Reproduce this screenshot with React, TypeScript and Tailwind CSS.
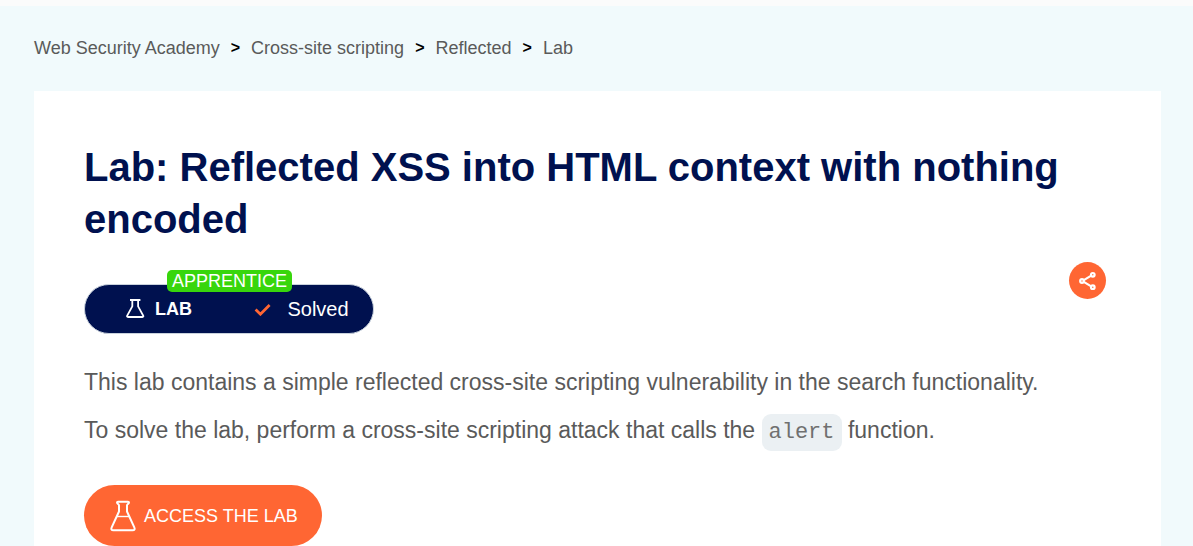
import { Fragment } from "react";

const crumbs = ["Web Security Academy", "Cross-site scripting", "Reflected"];

function SmallFlask() {
  return (
    <svg viewBox="0 0 20 20" className="h-5 w-5" fill="none" stroke="currentColor" strokeWidth="1.8" aria-hidden="true">
      <path d="M5 1h10.4M7.3 1v6.4L2.2 16.6q-.6 1.4.8 1.4h14.4q1.4 0 .8-1.4L13.1 7.4V1" strokeLinejoin="round" />
    </svg>
  );
}

function LargeFlask() {
  return (
    <svg viewBox="0 0 26 32" className="h-8 w-[26px]" fill="none" stroke="currentColor" strokeWidth="2" aria-hidden="true">
      <path
        d="M8 1.7h10q1 0 1 .9t-1.1 1.4q-.9.5-.9 1.5v6l7.2 15.6q1.4 3.2-1.6 3.2H3.4q-3 0-1.6-3.2L9 11.5v-6q0-1-.9-1.5Q7 3.5 7 2.6t1-.9z"
        strokeLinejoin="round"
      />
      <path d="M6.6 16.5h12.8" strokeWidth="1.4" />
    </svg>
  );
}

function Check() {
  return (
    <svg viewBox="0 0 17 14" className="h-3.5 w-[17px]" fill="none" stroke="#ff6633" strokeWidth="2.8" aria-hidden="true">
      <path d="M1.6 7.6l4.8 4.6L15.6 3" />
    </svg>
  );
}

function Share() {
  return (
    <svg viewBox="0 0 18 20" className="h-5 w-[18px]" fill="none" stroke="currentColor" strokeWidth="2.2" aria-hidden="true">
      <path d="M4.8 9.1l7-4.2M4.8 10.9l7 4.2" />
      <circle cx="3" cy="10" r="1.8" />
      <circle cx="13.8" cy="3.8" r="1.8" />
      <circle cx="13.8" cy="16.2" r="1.8" />
    </svg>
  );
}

export default function App() {
  return (
    <div className="flex min-h-screen flex-col border-t-[6px] border-[#fbfbfb] bg-[#f1fafc] pr-8 pl-[34px] font-['Liberation_Sans',Arial,sans-serif] text-[#5a5a5a]">
      <nav aria-label="Breadcrumb" className="flex h-[85px] items-center gap-[11px] pb-0.5 text-lg">
        {crumbs.map((crumb) => (
          <Fragment key={crumb}>
            <a href="#">{crumb}</a>
            <span className="text-base font-bold text-black" aria-hidden="true">
              &gt;
            </span>
          </Fragment>
        ))}
        <a href="#">Lab</a>
      </nav>

      <main className="grow bg-white pt-[50px] pr-[55px] pl-[50px]">
        <h1 className="text-[40px] leading-[52px] font-bold text-[#00114f]">
          Lab: Reflected XSS into HTML context with nothing encoded
        </h1>

        <div className="mt-[17px] flex items-start justify-between">
          <div className="relative mt-[22px] flex h-[50px] w-[290px] items-center rounded-full border border-[#c9d2dc] bg-[#00114f] text-white">
            <span className="absolute -top-[15px] left-[82px] rounded-[5px] bg-[#38d60c] px-[5px] text-lg leading-[22px]">
              APPRENTICE
            </span>
            <span className="flex flex-1 items-center justify-center gap-2.5 pl-0.5 text-lg font-bold">
              <SmallFlask />
              LAB
            </span>
            <span className="flex flex-1 items-center justify-center gap-4 text-xl">
              <Check />
              Solved
            </span>
          </div>
          <button
            type="button"
            aria-label="Share"
            className="flex size-[37px] items-center justify-center rounded-full bg-[#ff6633] text-white"
          >
            <Share />
          </button>
        </div>

        <div className="mt-6 text-[23px] leading-[48px]">
          <p>This lab contains a simple reflected cross-site scripting vulnerability in the search functionality.</p>
          <p>
            To solve the lab, perform a cross-site scripting attack that calls the{" "}
            <code className="rounded-[9px] bg-[#ebf0f3] px-[7px] py-1.5 font-['Liberation_Mono','Courier_New',monospace] text-[22px] text-[#707070]">
              alert
            </code>{" "}
            function.
          </p>
        </div>

        <a
          href="#"
          className="mt-7 inline-flex h-[61px] items-center gap-2 rounded-full bg-[#ff6633] pr-6 pl-[26px] text-lg text-white"
        >
          <LargeFlask />
          ACCESS THE LAB
        </a>
      </main>
    </div>
  );
}
